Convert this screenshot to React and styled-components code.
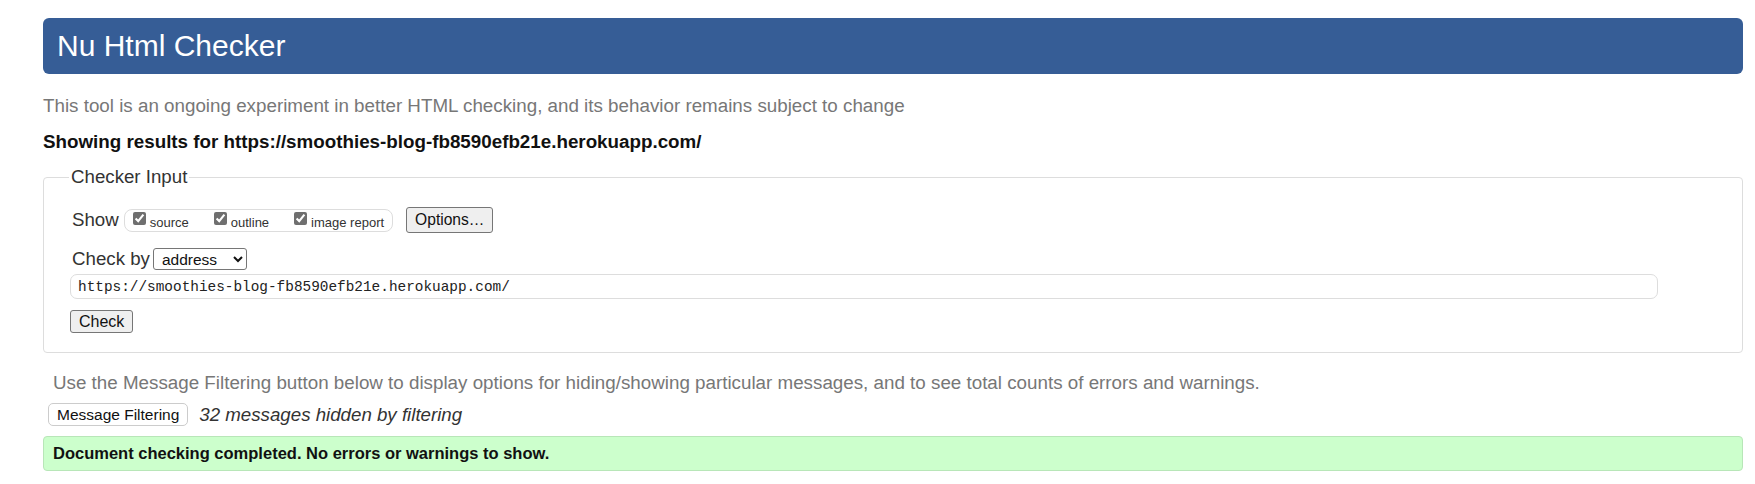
import React from 'react';
import styled, { createGlobalStyle } from 'styled-components';

const GlobalStyle = createGlobalStyle`
  body {
    margin: 0;
    padding: 18px 12px 0 43px;
    background: #fff;
    font-family: "Liberation Sans", Arial, sans-serif;
    color: #222;
  }
`;

const Page = styled.div`
  display: flex;
  flex-direction: column;
`;

const Header = styled.h1`
  margin: 0;
  height: 56px;
  line-height: 56px;
  padding-left: 14px;
  background: #365d96;
  border-radius: 6px;
  color: #fff;
  font-size: 30px;
  font-weight: normal;
`;

const Note = styled.p`
  margin: ${props => props.top || 0}px 0 0 ${props => props.indent || 0}px;
  font-size: 18.8px;
  line-height: 22px;
  color: #777;
`;

const Results = styled.p`
  margin: 14px 0 0;
  font-size: 18.8px;
  line-height: 22px;
  font-weight: bold;
  color: #111;
`;

const Fieldset = styled.fieldset`
  margin: 13px 0 0;
  padding: 19px 84px 19px 28px;
  border: 1px solid #ddd;
  border-radius: 4px;
  display: flex;
  flex-direction: column;
  align-items: flex-start;
`;

const Legend = styled.legend`
  margin-left: -3px;
  padding: 0 2px;
  font-size: 18.7px;
  line-height: 22px;
  color: #333;
`;

const Row = styled.div`
  display: flex;
  align-items: center;
  margin-top: ${props => props.top || 0}px;
  width: ${props => (props.full ? '100%' : 'auto')};
`;

const Label = styled.span`
  font-size: 18.7px;
  color: #333;
  margin-right: ${props => props.gap || 5}px;
`;

const CheckGroup = styled.div`
  display: flex;
  align-items: center;
  gap: 25px;
  height: 21px;
  padding: 0 8px;
  border: 1px solid #ddd;
  border-radius: 8px;
  margin-right: 13px;
`;

const CheckItem = styled.label`
  display: flex;
  align-items: center;
  font-size: 13px;
  color: #333;

  input {
    margin: 0 4px 4px 0;
    width: 13px;
    height: 13px;
    accent-color: #6f6f6f;
  }

  span {
    padding-top: 4px;
  }
`;

const Button = styled.button`
  font-family: "Liberation Sans", Arial, sans-serif;
  font-size: ${props => props.size || 15.6}px;
  color: #111;
  height: ${props => props.h || 26}px;
  padding: 0 ${props => props.px || 8}px;
  background: ${props => (props.light ? '#fff' : '#efefef')};
  border: 1px solid ${props => (props.light ? '#ccc' : '#767676')};
  border-radius: ${props => (props.light ? 5 : 3)}px;
`;

const Select = styled.select`
  font-family: "Liberation Sans", Arial, sans-serif;
  font-size: 15.5px;
  width: 94px;
  height: 22px;
  padding: 0 0 0 4px;
  border: 1px solid #767676;
  border-radius: 3px;
  background: #fff;
  color: #111;
`;

const UrlInput = styled.input`
  box-sizing: border-box;
  width: calc(100% + 2px);
  margin-left: -2px;
  height: 25px;
  padding: 0 7px;
  border: 1px solid #ddd;
  border-radius: 7px;
  font-family: "Liberation Mono", "Courier New", monospace;
  font-size: 14.4px;
  color: #222;
`;

const FilterRow = styled.div`
  display: flex;
  align-items: center;
  gap: 11px;
  margin: 9px 0 0 5px;
`;

const Hidden = styled.em`
  font-size: 18.7px;
  color: #333;
`;

const Success = styled.div`
  margin-top: 10px;
  height: 33px;
  display: flex;
  align-items: center;
  padding-left: 9px;
  background: #ccffcc;
  border: 1px solid #b8e6b8;
  border-radius: 4px;
  font-size: 16.5px;
  font-weight: bold;
  color: #111;
`;

const url = 'https://smoothies-blog-fb8590efb21e.herokuapp.com/';

const App = () => (
  <Page>
    <GlobalStyle />
    <Header>Nu Html Checker</Header>
    <Note top={21}>
      This tool is an ongoing experiment in better HTML checking, and its behavior remains subject to change
    </Note>
    <Results>Showing results for {url}</Results>
    <Fieldset>
      <Legend>Checker Input</Legend>
      <Row>
        <Label>Show</Label>
        <CheckGroup>
          <CheckItem><input type="checkbox" defaultChecked /><span>source</span></CheckItem>
          <CheckItem><input type="checkbox" defaultChecked /><span>outline</span></CheckItem>
          <CheckItem><input type="checkbox" defaultChecked /><span>image report</span></CheckItem>
        </CheckGroup>
        <Button>Options…</Button>
      </Row>
      <Row top={15}>
        <Label gap={3}>Check by</Label>
        <Select defaultValue="address">
          <option value="address">address</option>
          <option value="upload">file upload</option>
          <option value="text">text input</option>
        </Select>
      </Row>
      <Row top={4} full>
        <UrlInput type="text" defaultValue={url} />
      </Row>
      <Row top={11}>
        <Button h={23} px={8} size={16} style={{ marginLeft: -2 }}>Check</Button>
      </Row>
    </Fieldset>
    <Note top={19} indent={10}>
      Use the Message Filtering button below to display options for hiding/showing particular messages, and to see total counts of errors and warnings.
    </Note>
    <FilterRow>
      <Button light h={23} px={8} size={15.5}>Message Filtering</Button>
      <Hidden>32 messages hidden by filtering</Hidden>
    </FilterRow>
    <Success>Document checking completed. No errors or warnings to show.</Success>
  </Page>
);

export default App;
